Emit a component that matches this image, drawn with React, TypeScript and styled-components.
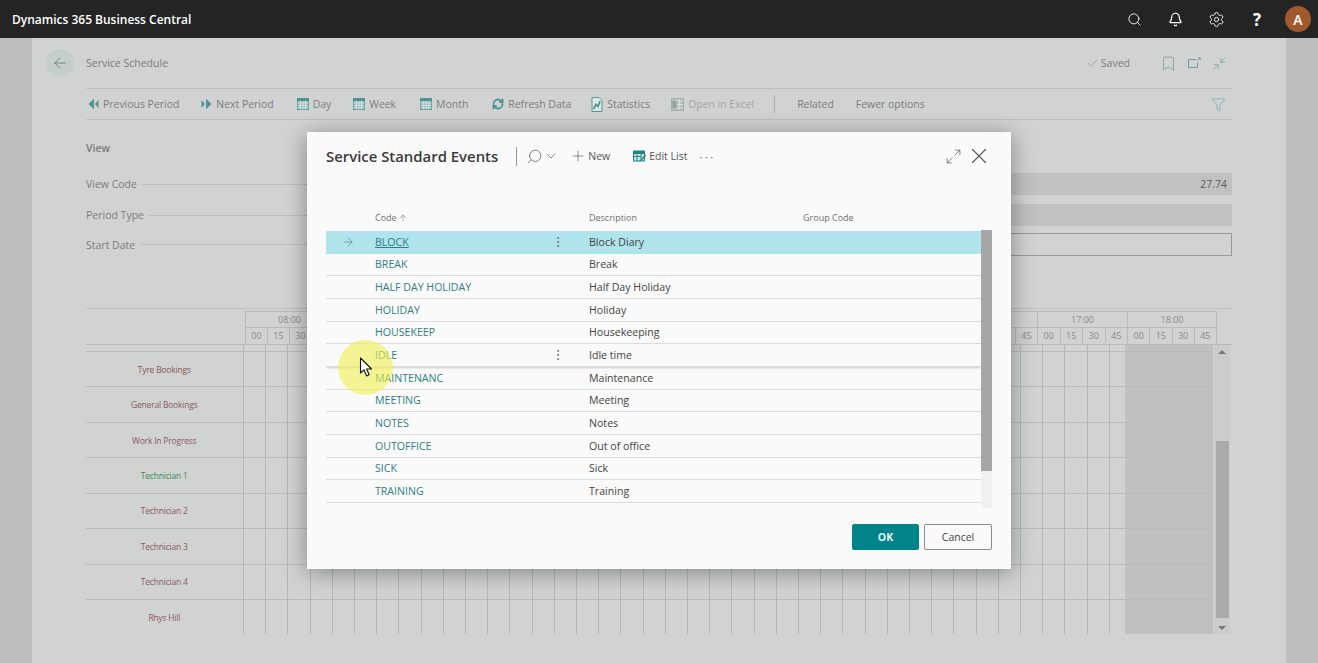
import { ArrowLeft, ArrowRight, ArrowUp, Bell, Bookmark, Check, ChevronDown, Funnel, Maximize2, Minimize2, MoreVertical, Plus, RefreshCw, Search, Settings, X } from "lucide-react"
import styled, { createGlobalStyle } from "styled-components"

const GlobalStyle = createGlobalStyle`
    html, body {
        margin: 0;
        height: 100%;
        overflow: hidden;
    }
    body {
        font-family: "Open Sans", "Liberation Sans", sans-serif;
        background-color: #d1d2d2;
    }
`

const Wrapper = styled.div`
    position: relative;
    display: flex;
    flex-direction: column;
    width: 1318px;
    height: 663px;
    overflow: hidden;
`

const TopBar = styled.header`
    display: flex;
    align-items: center;
    justify-content: space-between;
    flex: 0 0 38px;
    padding: 0 7px 0 12px;
    background-color: #242424;
    color: white;
`

const Brand = styled.div`
    font-size: 12px;
    font-weight: 600;
    letter-spacing: -0.01px;
`

const TopActions = styled.div`
    display: flex;
    align-items: center;
    gap: 15px;
`

const TopIcon = styled.span`
    display: flex;
    justify-content: center;
    align-items: center;
    width: 26px;
    height: 26px;
    font-size: 17px;
    font-weight: 700;
`

const Avatar = styled.span`
    display: flex;
    justify-content: center;
    align-items: center;
    width: 26px;
    height: 26px;
    border-radius: 100%;
    background-color: #a0582c;
    font-size: 14px;
    font-weight: 600;
`

const Stage = styled.div`
    display: flex;
    flex: 1;
    min-height: 0;
`

const Gutter = styled.div`
    flex: 0 0 32px;
    background-color: #bdbfbf;
`

const Page = styled.main`
    display: flex;
    flex-direction: column;
    flex: 1;
    padding: 10px 54px 0;
    background-color: #d1d2d2;
    color: #7c7c7c;
`

const PageHeader = styled.div`
    display: flex;
    align-items: center;
    height: 30px;
    font-size: 10.5px;
`

const BackButton = styled.span`
    display: flex;
    justify-content: center;
    align-items: center;
    width: 28px;
    height: 28px;
    margin-left: -40px;
    margin-right: 12px;
    border-radius: 100%;
    background-color: #c4cfcd;
    color: #5f6b6b;
`

const PageTitle = styled.div`
    flex: 1;
`

const Saved = styled.div`
    display: flex;
    align-items: center;
    gap: 2px;
    margin-right: 30px;
`

const HeaderIcons = styled.div`
    display: flex;
    align-items: center;
    gap: 11px;
    margin-right: 5px;
    color: #6f9f9c;
`

const Toolbar = styled.div`
    display: flex;
    align-items: center;
    box-sizing: border-box;
    height: 32px;
    margin-top: 10px;
    padding-left: 2px;
    gap: 22px;
    border-top: 1px solid #b9c3c1;
    border-bottom: 1px solid #b9c3c1;
    font-size: 10.45px;
`

const ToolButton = styled.span<{ $muted?: boolean; $after?: number }>`
    display: flex;
    align-items: center;
    gap: 4px;
    margin-right: ${(p) => p.$after ?? 0}px;
    white-space: nowrap;
    color: ${(p) => (p.$muted ? "#a0a4a3" : "inherit")};
`

const ToolSeparator = styled.span`
    width: 1px;
    height: 18px;
    background-color: #a6b0ae;
`

const FilterIcon = styled.span`
    display: flex;
    margin-left: auto;
    margin-right: 6px;
    color: #6fa5a2;
`

const SectionLabel = styled.div`
    height: 17px;
    margin-top: 21px;
    margin-bottom: 15px;
    font-size: 10.5px;
    font-weight: 600;
`

const FormRow = styled.div<{ $gap: number; $tall?: boolean }>`
    display: flex;
    align-items: center;
    height: ${(p) => (p.$tall ? 23 : 22)}px;
    margin-bottom: ${(p) => p.$gap}px;
    font-size: 10.5px;
`

const Leader = styled.span`
    flex: 1;
    margin: 0 5px;
    border-bottom: 1px dotted #a9b0af;
`

const Field = styled.div<{ $outlined?: boolean }>`
    display: flex;
    justify-content: flex-end;
    align-items: center;
    box-sizing: border-box;
    width: 900px;
    height: 100%;
    padding-right: 5px;
    color: #5c5c5c;
    background-color: ${(p) => (p.$outlined ? "transparent" : "#c0c2c1")};
    border: ${(p) => (p.$outlined ? "1px solid #969b99" : "none")};
`

const Schedule = styled.section`
    display: flex;
    flex-direction: column;
    margin-top: 52px;
    border-top: 1px solid #b9c3c1;
`

const ScheduleHead = styled.div`
    display: flex;
    padding-left: 159px;
    padding-top: 2px;
    border-bottom: 1px solid #b5bdbb;
`

const HourCell = styled.div<{ $wide?: boolean }>`
    flex: 0 0 ${(p) => (p.$wide ? 90 : 88)}px;
    box-sizing: border-box;
    border-left: 1px solid #b5bdbb;
    border-top: 1px solid #b5bdbb;
    font-size: 9px;
    color: #868b8a;
    text-align: center;
    &:last-child {
        border-right: 1px solid #b5bdbb;
    }
`

const HourLabel = styled.div`
    height: 15px;
    line-height: 15px;
    border-bottom: 1px solid #b5bdbb;
`

const MinuteRow = styled.div`
    display: flex;
    height: 16px;
    line-height: 16px;
`

const MinuteCell = styled.span`
    flex: 1;
    border-left: 1px solid #b5bdbb;
    &:first-child {
        border-left: none;
    }
`

const ScheduleBody = styled.div`
    display: flex;
`

const RowList = styled.div`
    display: flex;
    flex-direction: column;
    width: 1127px;
`

const TimeRow = styled.div<{ $height: number }>`
    display: flex;
    height: ${(p) => p.$height}px;
    box-sizing: border-box;
    border-bottom: 1px solid #b5bdbb;
    &:last-child {
        height: 34px;
        border-bottom: none;
    }
`

const RowLabel = styled.div<{ $active?: boolean }>`
    display: flex;
    justify-content: center;
    align-items: center;
    flex: 0 0 156.5px;
    font-size: 8.5px;
    letter-spacing: -0.2px;
    color: ${(p) => (p.$active ? "#3f8a58" : "#8b5a60")};
`

const Slots = styled.div`
    flex: 0 0 882px;
    background-image: repeating-linear-gradient(90deg, #aeb8b5 0 1px, transparent 1px 22.2px);
`

const Closed = styled.div`
    flex: 1;
    background-color: #bfc0c0;
`

const ScheduleScroll = styled.div`
    display: flex;
    flex-direction: column;
    align-items: center;
    justify-content: space-between;
    width: 16px;
    margin-left: 1px;
    padding: 5px 0 4px;
    box-sizing: border-box;
    background-color: #cbcccc;
`

const ScheduleThumb = styled.div`
    width: 13px;
    height: 177px;
    margin-top: 78px;
    background-color: #a9abab;
`

const Arrow = styled.span<{ $down?: boolean }>`
    width: 0;
    height: 0;
    border-left: 4px solid transparent;
    border-right: 4px solid transparent;
    border-${(p) => (p.$down ? "top" : "bottom")}: 4px solid #70797a;
`

/* dialog sits over the page */
const Dialog = styled.div`
    position: absolute;
    left: 307px;
    top: 132px;
    display: flex;
    flex-direction: column;
    box-sizing: border-box;
    width: 704px;
    height: 437px;
    padding: 0 19px;
    background-color: #fafafa;
    box-shadow: 0 3px 22px rgba(0, 0, 0, 0.38);
    color: #444;
`

const DialogHeader = styled.div`
    display: flex;
    align-items: center;
    height: 48px;
    font-size: 10.5px;
`

const DialogTitle = styled.h2`
    margin: 0;
    font-size: 14.9px;
    font-weight: 600;
    color: #3a3a3a;
    white-space: nowrap;
`

const HeaderDivider = styled.span`
    width: 1px;
    height: 19px;
    margin: 0 9px 0 18px;
    background-color: #999;
`

const DialogAction = styled.span<{ $gap: number; $after: number }>`
    display: flex;
    align-items: center;
    gap: ${(p) => p.$gap}px;
    margin-right: ${(p) => p.$after}px;
    white-space: nowrap;
    color: #555;
`

const FlipSearch = styled(Search)`
    transform: scaleX(-1);
`

const MoreDots = styled.span`
    font-size: 11px;
    letter-spacing: 2.5px;
    color: #666;
`

const DialogTools = styled.div`
    display: flex;
    align-items: center;
    gap: 4px;
    margin-left: auto;
    color: #555;
`

const GridWrap = styled.div`
    display: flex;
    margin-top: 30px;
    height: 298px;
    font-size: 10.6px;
`

const Table = styled.div`
    flex: 0 0 655px;
`

const TableHead = styled.div`
    display: grid;
    grid-template-columns: 49px 214px 214px 1fr;
    align-items: center;
    box-sizing: border-box;
    height: 21px;
    padding-bottom: 6px;
    font-size: 9px;
    color: #707070;
`

const HeadCell = styled.span<{ $col: number }>`
    display: flex;
    align-items: center;
    gap: 1px;
    grid-column: ${(p) => p.$col};
`

const TableRow = styled.div<{ $selected?: boolean; $hover?: boolean }>`
    display: grid;
    grid-template-columns: 49px 214px 214px 1fr;
    align-items: center;
    box-sizing: border-box;
    height: 22.67px;
    border-bottom: 1px solid ${(p) => (p.$selected ? "#aee4ea" : "#d9dcdc")};
    background-color: ${(p) => (p.$selected ? "#aee4ea" : "transparent")};
    box-shadow: ${(p) => (p.$hover ? "0 2px 2px -1px rgba(0,0,0,.18)" : "none")};
`

const MarkerCell = styled.span`
    display: flex;
    justify-content: center;
    padding-right: 6px;
    color: #5c6b6c;
`

const CodeCell = styled.span`
    display: flex;
    justify-content: space-between;
    align-items: center;
    padding-right: 24px;
`

const CodeLink = styled.a<{ $selected?: boolean }>`
    color: #2f8082;
    text-decoration: ${(p) => (p.$selected ? "underline" : "none")};
`

const RowMenu = styled.span`
    display: flex;
    color: #6b6b6b;
`

const TableScroll = styled.div`
    flex: 0 0 11px;
    margin-top: 20px;
    height: 278px;
    background-color: #f0f0f0;
`

const TableThumb = styled.div`
    height: 241px;
    background-color: #a6a6a6;
`

const DialogFooter = styled.div`
    display: flex;
    justify-content: flex-end;
    gap: 5px;
    margin-top: 16px;
`

const Button = styled.button<{ $primary?: boolean }>`
    box-sizing: border-box;
    height: 26px;
    width: ${(p) => (p.$primary ? 67 : 68)}px;
    padding: 0;
    font-family: inherit;
    font-size: 10.5px;
    font-weight: ${(p) => (p.$primary ? 700 : 400)};
    color: ${(p) => (p.$primary ? "#e8f6f6" : "#444")};
    background-color: ${(p) => (p.$primary ? "#00848a" : "#fafafa")};
    border: 1px solid ${(p) => (p.$primary ? "#00848a" : "#8a8a8a")};
    border-radius: 2px;
`

/* recorder's cursor highlight */
const CursorHalo = styled.div`
    position: absolute;
    left: 338px;
    top: 340px;
    width: 55px;
    height: 55px;
    border-radius: 100%;
    background-color: rgba(240, 240, 80, 0.6);
`

const CursorArrow = styled.svg`
    position: absolute;
    left: 359px;
    top: 357px;
`

const ArrowSvg = styled.svg<{ $back?: boolean }>`
    transform: ${(p) => (p.$back ? "scaleX(-1)" : "none")};
`

const teal = "#4f9393"

function TwinArrow({ back }: { back?: boolean }) {
    return (
        <ArrowSvg $back={back} width="11" height="12" viewBox="0 0 11 12" fill={teal}>
            <path d="M.5 2 L4 6 L.5 10 Z" />
            <path d="M5 .8 L10.5 6 L5 11.2 Z" />
        </ArrowSvg>
    )
}

function CalendarIcon() {
    return (
        <svg width="12" height="12" viewBox="0 0 12 12">
            <rect x="0.5" y="0.5" width="11" height="11" fill="#9fc2bf" stroke={teal} />
            <rect x="0" y="0" width="12" height="3" fill={teal} />
            <path d="M0 5H12M0 7.5H12M0 10H12M3.5 3V12M6 3V12M8.5 3V12" stroke="#d7e3e1" strokeWidth="0.7" />
        </svg>
    )
}

function StatisticsIcon() {
    return (
        <svg width="12" height="15" viewBox="0 0 12 15" fill="none">
            <path d="M1 .5H8L11 3.5V14.5H1Z" fill="#dfe7e6" stroke="#5d9492" />
            <path d="M2.5 12L5 7.5L7 9.5L9 4" stroke={teal} strokeWidth="1.7" />
        </svg>
    )
}

function ExcelIcon() {
    return (
        <svg width="13" height="13" viewBox="0 0 13 13">
            <rect x="0.5" y="0.5" width="12" height="12" fill="#b4bfb9" stroke="#a3aeaa" />
            <path d="M5 3H12M5 6.5H12M5 10H12M8.5 1V12" stroke="#d7dcd9" />
            <rect x="1.5" y="3" width="4" height="7" fill="#8fa39b" />
        </svg>
    )
}

function EditListIcon() {
    return (
        <svg width="13" height="12" viewBox="0 0 13 12">
            <rect x="0.5" y="1" width="11" height="10" fill="#c9e3e2" stroke="#1f8385" />
            <rect x="0" y="1" width="12" height="3" fill="#1f8385" />
            <path d="M0 6.5H8M4 4V11M8 4V9" stroke="#1f8385" strokeWidth="0.9" />
            <path d="M12.5 4.5 L7 10 L6 11.5 L8 11 L13 6Z" fill="#1f8385" />
        </svg>
    )
}

function OpenNewIcon() {
    return (
        <svg width="13" height="12" viewBox="0 0 13 12" fill="none" stroke="currentColor">
            <path d="M8 2.5H.5V10.5H9.5V5.5" />
            <path d="M9 4 L12 1 M10 .8H12.2V3" />
        </svg>
    )
}

const hours = ["08:00", "09:00", "10:00", "11:00", "12:00", "13:00", "14:00", "15:00", "16:00", "17:00", "18:00"]
const minutes = ["00", "15", "30", "45"]

const resources = [
    { name: "Tyre Bookings" },
    { name: "General Bookings" },
    { name: "Work In Progress" },
    { name: "Technician 1", active: true },
    { name: "Technician 2" },
    { name: "Technician 3" },
    { name: "Technician 4" },
    { name: "Rhys Hill" },
]

const events = [
    ["BLOCK", "Block Diary"],
    ["BREAK", "Break"],
    ["HALF DAY HOLIDAY", "Half Day Holiday"],
    ["HOLIDAY", "Holiday"],
    ["HOUSEKEEP", "Housekeeping"],
    ["IDLE", "Idle time"],
    ["MAINTENANC", "Maintenance"],
    ["MEETING", "Meeting"],
    ["NOTES", "Notes"],
    ["OUTOFFICE", "Out of office"],
    ["SICK", "Sick"],
    ["TRAINING", "Training"],
]

export default function App() {
    return (
        <Wrapper>
            <GlobalStyle />
            <TopBar>
                <Brand>Dynamics 365 Business Central</Brand>
                <TopActions>
                    <TopIcon><Search size={15} strokeWidth={1.4} /></TopIcon>
                    <TopIcon><Bell size={15} strokeWidth={1.9} /></TopIcon>
                    <TopIcon><Settings size={17} strokeWidth={1.3} /></TopIcon>
                    <TopIcon>?</TopIcon>
                    <Avatar>A</Avatar>
                </TopActions>
            </TopBar>
            <Stage>
                <Gutter />
                <Page>
                    <PageHeader>
                        <BackButton><ArrowLeft size={18} strokeWidth={1} /></BackButton>
                        <PageTitle>Service Schedule</PageTitle>
                        <Saved><Check size={13} strokeWidth={1} />Saved</Saved>
                        <HeaderIcons>
                            <Bookmark size={17} strokeWidth={1.1} />
                            <OpenNewIcon />
                            <Minimize2 size={15} strokeWidth={1.1} />
                        </HeaderIcons>
                    </PageHeader>
                    <Toolbar>
                        <ToolButton><TwinArrow back />Previous Period</ToolButton>
                        <ToolButton $after={1}><TwinArrow />Next Period</ToolButton>
                        <ToolButton><CalendarIcon />Day</ToolButton>
                        <ToolButton $after={2}><CalendarIcon />Week</ToolButton>
                        <ToolButton $after={2}><CalendarIcon />Month</ToolButton>
                        <ToolButton $after={-2}><RefreshCw size={12} strokeWidth={3.6} color={teal} />Refresh Data</ToolButton>
                        <ToolButton $after={-1}><StatisticsIcon />Statistics</ToolButton>
                        <ToolButton $after={-2} $muted><ExcelIcon />Open in Excel</ToolButton>
                        <ToolSeparator />
                        <ToolButton>Related</ToolButton>
                        <ToolButton>Fewer options</ToolButton>
                        <FilterIcon><Funnel size={15} strokeWidth={1.1} /></FilterIcon>
                    </Toolbar>
                    <SectionLabel>View</SectionLabel>
                    <FormRow $gap={9}>View Code<Leader /><Field>27.74</Field></FormRow>
                    <FormRow $gap={7}>Period Type<Leader /><Field /></FormRow>
                    <FormRow $gap={0} $tall>Start Date<Leader /><Field $outlined /></FormRow>
                    <Schedule>
                        <ScheduleHead>
                            {hours.map((hour, i) => {
                                // these columns lie fully behind the dialog
                                const covered = i > 0 && i < 8
                                return (
                                    <HourCell key={hour} $wide={i > 8}>
                                        <HourLabel>{covered ? "" : hour}</HourLabel>
                                        <MinuteRow>
                                            {minutes.map((minute) => <MinuteCell key={minute}>{covered ? "" : minute}</MinuteCell>)}
                                        </MinuteRow>
                                    </HourCell>
                                )
                            })}
                        </ScheduleHead>
                        <ScheduleBody>
                            <RowList>
                                <TimeRow $height={7}>
                                    <RowLabel />
                                    <Slots />
                                    <Closed />
                                </TimeRow>
                                {resources.map((resource) => (
                                    <TimeRow key={resource.name} $height={35.45}>
                                        <RowLabel $active={resource.active}>{resource.name}</RowLabel>
                                        <Slots />
                                        <Closed />
                                    </TimeRow>
                                ))}
                            </RowList>
                            <ScheduleScroll>
                                <Arrow />
                                <ScheduleThumb />
                                <Arrow $down />
                            </ScheduleScroll>
                        </ScheduleBody>
                    </Schedule>
                </Page>
                <Gutter />
            </Stage>

            <Dialog>
                <DialogHeader>
                    <DialogTitle>Service Standard Events</DialogTitle>
                    <HeaderDivider />
                    <DialogAction $gap={0} $after={11}>
                        <FlipSearch size={17} strokeWidth={1} />
                        <ChevronDown size={16} strokeWidth={1} />
                    </DialogAction>
                    <DialogAction $gap={2} $after={23}><Plus size={16} strokeWidth={1} />New</DialogAction>
                    <DialogAction $gap={3} $after={12}><EditListIcon />Edit List</DialogAction>
                    <MoreDots>···</MoreDots>
                    <DialogTools>
                        <Maximize2 size={17} strokeWidth={1} />
                        <X size={26} strokeWidth={1} />
                    </DialogTools>
                </DialogHeader>
                <GridWrap>
                    <Table>
                        <TableHead>
                            <HeadCell $col={2}>Code <ArrowUp size={10} strokeWidth={1.3} /></HeadCell>
                            <HeadCell $col={3}>Description</HeadCell>
                            <HeadCell $col={4}>Group Code</HeadCell>
                        </TableHead>
                        {events.map(([code, description], i) => (
                            <TableRow key={code} $selected={i === 0} $hover={i === 5}>
                                <MarkerCell>{i === 0 && <ArrowRight size={14} strokeWidth={1} />}</MarkerCell>
                                <CodeCell>
                                    <CodeLink $selected={i === 0}>{code}</CodeLink>
                                    {(i === 0 || i === 5) && <RowMenu><MoreVertical size={14} strokeWidth={1.5} /></RowMenu>}
                                </CodeCell>
                                <span>{description}</span>
                            </TableRow>
                        ))}
                    </Table>
                    <TableScroll><TableThumb /></TableScroll>
                </GridWrap>
                <DialogFooter>
                    <Button $primary>OK</Button>
                    <Button>Cancel</Button>
                </DialogFooter>
            </Dialog>

            <CursorHalo />
            <CursorArrow width="15" height="21" viewBox="0 0 15 21">
                <path d="M1.5 1 L1.5 16 L5 12.8 L7.6 19 L10.2 17.8 L7.6 12 L12.5 12 Z" fill="white" stroke="#111" strokeWidth="1.1" strokeLinejoin="round" />
            </CursorArrow>
        </Wrapper>
    )
}
